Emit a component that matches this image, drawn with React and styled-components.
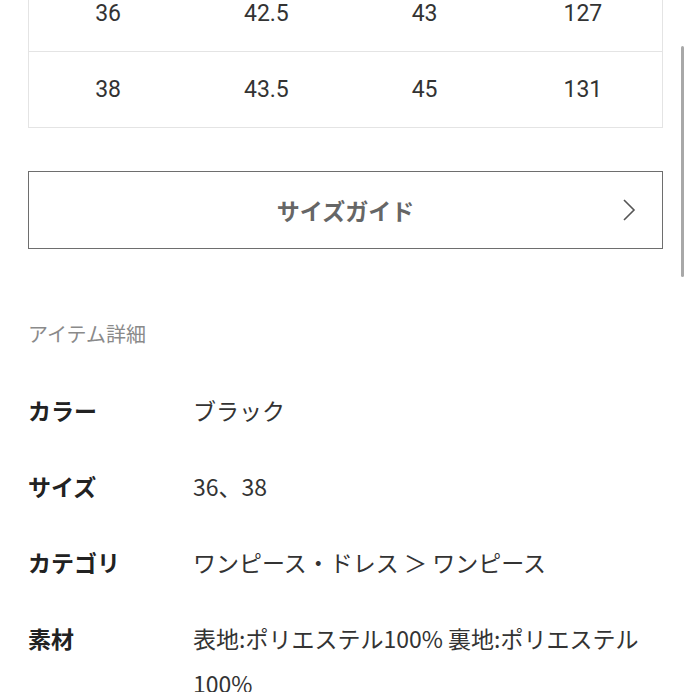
import React from 'react';
import styled, {createGlobalStyle} from 'styled-components';

const GlobalStyle = createGlobalStyle`
  html, body {
    margin: 0;
    padding: 0;
    background: #fff;
    overflow: hidden;
  }
  body {
    font-family: "Noto Sans CJK JP", "Noto Sans", sans-serif;
    color: #333;
  }
`;

const Page = styled.div`
  width: 692px;
  height: 692px;
  box-sizing: border-box;
  padding: 0 29px 0 28px;
  position: relative;
  overflow: hidden;
`;

const SizeTable = styled.div`
  margin-top: -25px;
  border: 1px solid #e4e4e4;
`;

const TableRow = styled.div`
  display: grid;
  grid-template-columns: repeat(4, 1fr);
  height: 75px;
  align-items: center;
  border-top: ${p => (p.$first ? 'none' : '1px solid #e4e4e4')};
`;

const Cell = styled.div`
  text-align: center;
  font-size: 23px;
  color: #333;
  font-family: "Roboto", "Noto Sans CJK JP", sans-serif;
`;

const GuideButton = styled.button`
  margin-top: 43px;
  width: 100%;
  height: 78px;
  box-sizing: border-box;
  border: 1.5px solid #6e6e6e;
  background: #fff;
  display: flex;
  align-items: center;
  justify-content: center;
  position: relative;
  font-family: "Noto Sans CJK JP", sans-serif;
  font-size: 23px;
  font-weight: 700;
  color: #666;
  padding: 0;
`;

const Chevron = styled.svg`
  position: absolute;
  right: 26px;
  top: 50%;
  transform: translateY(-50%);
`;

const SectionTitle = styled.h2`
  margin: 72px 0 0;
  font-size: 20px;
  line-height: 26px;
  font-weight: 400;
  color: #8a8a8a;
`;

const DetailList = styled.dl`
  margin: 26px 0 0;
`;

const DetailRow = styled.div`
  display: grid;
  grid-template-columns: 165px 1fr;
  padding: 15px 0 16px;
  line-height: 45px;
`;

const Label = styled.dt`
  font-size: 23px;
  font-weight: 700;
  color: #222;
`;

const Value = styled.dd`
  margin: 0;
  font-size: 23px;
  color: #333;
`;

const Scrollbar = styled.div`
  position: absolute;
  right: 8px;
  top: 46px;
  width: 3px;
  height: 231px;
  border-radius: 2px;
  background: #a8a8a8;
`;

const sizes = [
  ['36', '42.5', '43', '127'],
  ['38', '43.5', '45', '131'],
];

const details = [
  ['カラー', 'ブラック'],
  ['サイズ', '36、38'],
  ['カテゴリ', 'ワンピース・ドレス ＞ ワンピース'],
  ['素材', '表地:ポリエステル100% 裏地:ポリエステル100%'],
];

export default function App() {
  return (
    <>
      <GlobalStyle />
      <Page>
        <SizeTable>
          {sizes.map((row, i) => (
            <TableRow key={i} $first={i === 0}>
              {row.map((v, j) => (
                <Cell key={j}>{v}</Cell>
              ))}
            </TableRow>
          ))}
        </SizeTable>
        <GuideButton>
          サイズガイド
          <Chevron width="14" height="24" viewBox="0 0 14 24" fill="none">
            <path d="M2 2 L12 12 L2 22" stroke="#555" strokeWidth="1.6" />
          </Chevron>
        </GuideButton>
        <SectionTitle>アイテム詳細</SectionTitle>
        <DetailList>
          {details.map(([k, v]) => (
            <DetailRow key={k}>
              <Label>{k}</Label>
              <Value>{v}</Value>
            </DetailRow>
          ))}
        </DetailList>
        <Scrollbar />
      </Page>
    </>
  );
}
